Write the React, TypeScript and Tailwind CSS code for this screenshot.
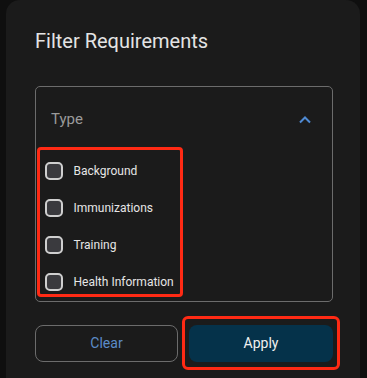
import React from "react";

const items = ["Background", "Immunizations", "Training", "Health Information"];

export default function App() {
  return (
    <div
      className="w-[367px] h-[378px] bg-[#0f0f0f] overflow-hidden"
      style={{ fontFamily: "Roboto, 'Liberation Sans', sans-serif" }}
    >
      <div className="ml-[6px] w-[354px] h-[378px] bg-[#1b1b1b] rounded-t-[14px] pl-[29px] pt-[27px]">
        <div className="text-[20px] leading-[28px] text-[#e4e4e4]">Filter Requirements</div>

        <div className="mt-[31px] w-[298px] h-[216px] border-[1.5px] border-[#6c6c6c] rounded-[5px] flex flex-col">
          <div className="h-[60px] flex items-center justify-between pl-[15px] pr-[20px] pt-[4px]">
            <span className="text-[15px] text-[#9a9a9a]">Type</span>
            <svg width="14" height="9" viewBox="0 0 14 9" fill="none">
              <path d="M2 7.5 L7 2.5 L12 7.5" stroke="#4f8ad3" strokeWidth="2" />
            </svg>
          </div>
          <div className="ml-[0.5px] w-[146px] h-[150px] border-[3px] border-[#ff2a14] rounded-[4px] pl-[5px] pt-[12px] flex flex-col gap-[19px]">
            {items.map((t) => (
              <div key={t} className="h-[18px] flex items-center gap-[11px]">
                <div className="w-[18px] h-[18px] rounded-[5px] border-2 border-[#cfcfcf] bg-[#3a3a3e] shrink-0" />
                <span className="text-[12px] text-[#e6e6e6] whitespace-nowrap">{t}</span>
              </div>
            ))}
          </div>
        </div>

        <div className="mt-[23px] flex gap-[11px]">
          <button className="w-[143px] h-[37px] border-[1.5px] border-[#6c6c6c] rounded-[8px] text-[14px] text-[#5b8cc8] flex items-center justify-center">
            Clear
          </button>
          <div className="relative">
            <button className="w-[144px] h-[37px] rounded-[8px] bg-[#05324a] text-[14px] text-[#f0f0f0] flex items-center justify-center">
              Apply
            </button>
            <div className="absolute left-[-7px] top-[-9px] w-[158px] h-[54px] border-[3px] border-[#ff2a14] rounded-[6px] pointer-events-none" />
          </div>
        </div>
      </div>
    </div>
  );
}
